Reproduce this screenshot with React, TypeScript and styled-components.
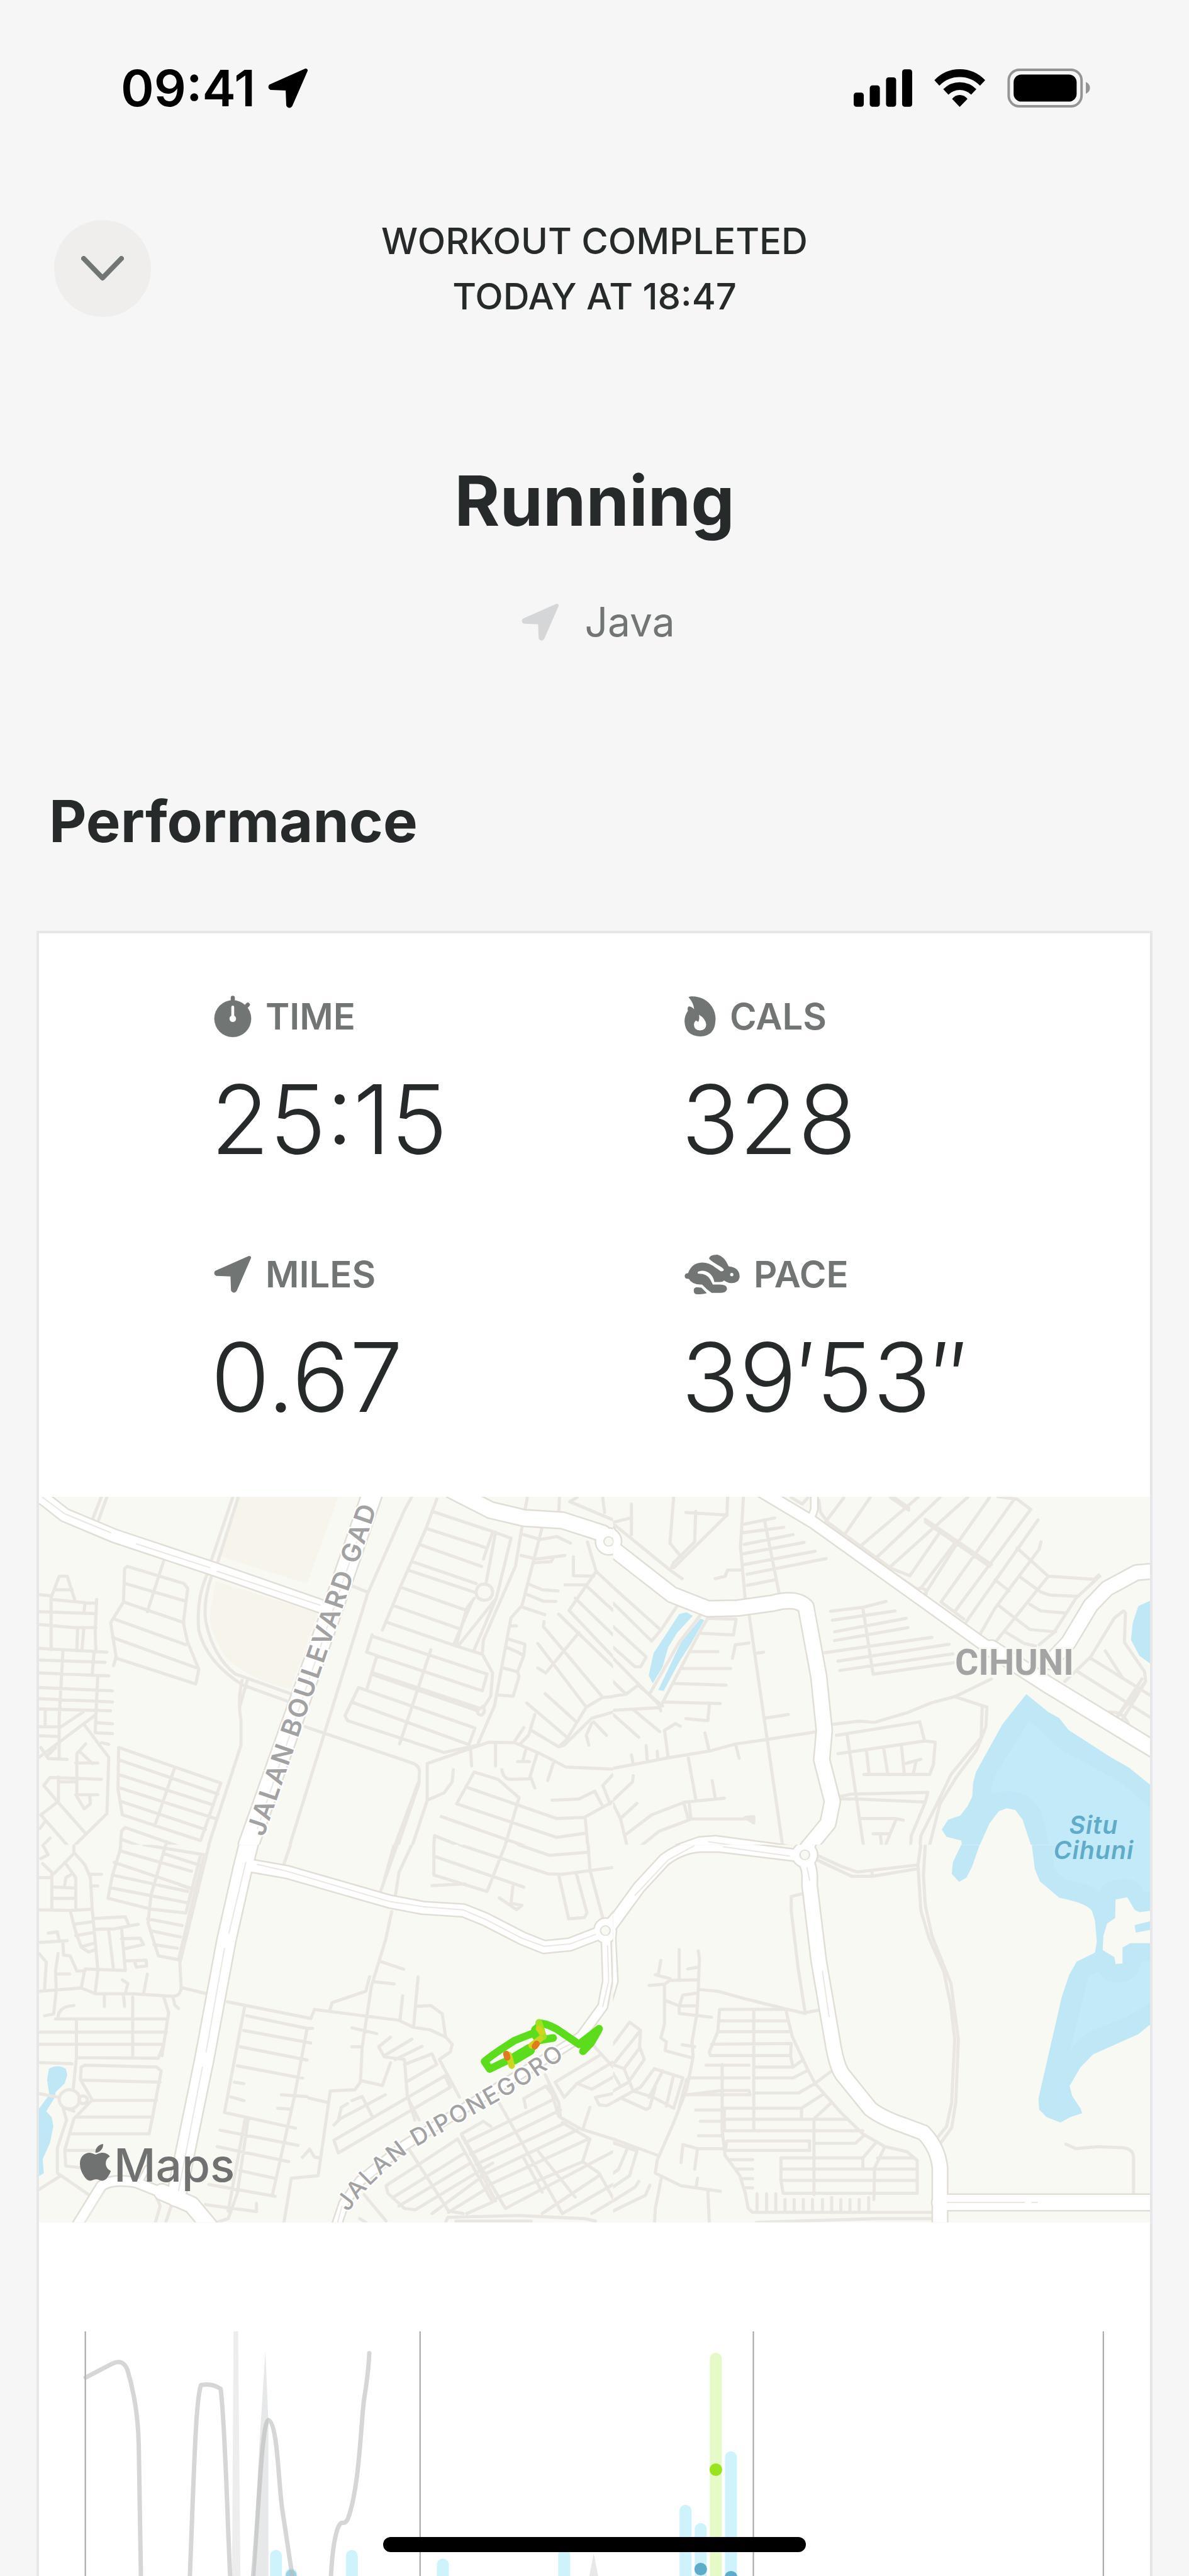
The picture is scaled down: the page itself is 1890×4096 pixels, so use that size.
import React from 'react'
import styled, { createGlobalStyle } from 'styled-components'
import { FaApple } from 'react-icons/fa'

const App = () => {
    return (
        <>
            <GlobalStyle />
            <Page>
                <StatusBar>
                    <Clock>
                        09:41
                        <LocationArrow size={64} />
                    </Clock>
                    <StatusIcons>
                        <SignalIcon />
                        <WifiIcon />
                        <BatteryIcon />
                    </StatusIcons>
                </StatusBar>

                <Header>
                    <CloseButton aria-label="Close">
                        <svg width="68" height="40" viewBox="0 0 68 40">
                            <path
                                d="M4 4 L34 35 L64 4"
                                fill="none"
                                stroke="currentColor"
                                strokeWidth="8"
                                strokeLinecap="round"
                                strokeLinejoin="round"
                            />
                        </svg>
                    </CloseButton>
                    <Summary>
                        WORKOUT COMPLETED
                        <br />
                        TODAY AT 18:47
                    </Summary>
                </Header>

                <Title>Running</Title>
                <Place>
                    <LocationArrow size={60} color="#d4d6d7" />
                    Java
                </Place>

                <SectionTitle>Performance</SectionTitle>
                <Card>
                    <Stats>
                        {stats.map(({ label, value, icon }) => (
                            <div key={label}>
                                <StatLabel>
                                    {icon}
                                    {label}
                                </StatLabel>
                                <StatValue>{value}</StatValue>
                            </div>
                        ))}
                    </Stats>
                    <RouteMap />
                    <ChartArea>
                        <PaceChart />
                    </ChartArea>
                </Card>
                <HomeIndicator />
            </Page>
        </>
    )
}

export default App

const LocationArrow = ({ size, color = 'currentColor' }: { size: number; color?: string }) => (
    <svg width={size} height={size} viewBox="0 0 64 64" fill={color} stroke={color} strokeWidth="6" strokeLinejoin="round">
        <path d="M60 4 L4 29 Q3 31 5 32 L31 33 L32 59 Q34 62 36 59 Z" />
    </svg>
)

const SignalIcon = () => (
    <svg width="93" height="60" viewBox="23 36 284 182">
        <rect x="23" y="149" width="49" height="69" rx="13" />
        <rect x="101" y="114" width="49" height="104" rx="13" />
        <rect x="180" y="75" width="49" height="143" rx="13" />
        <rect x="258" y="36" width="49" height="182" rx="13" />
    </svg>
)

const WifiIcon = () => (
    <svg width="81" height="60" viewBox="414 35 248 183">
        <path d="M415 88 Q467 35 538 35 Q609 35 662 88 L637 115 Q596 73 538 73 Q480 73 439 115 Z" />
        <path d="M458 132 Q492 98 538 98 Q585 98 619 132 L594 159 Q570 136 538 136 Q507 136 483 159 Z" />
        <path d="M501 179 Q517 160 538 160 Q560 160 576 179 L538 218 Z" />
    </svg>
)

const BatteryIcon = () => (
    <svg width="132" height="62" viewBox="770 32 402 190">
        <rect x="776" y="38" width="355" height="178" rx="52" fill="none" stroke="#929592" strokeWidth="12" />
        <rect x="800" y="61" width="307" height="132" rx="38" />
        <path d="M1152 97 Q1172 107 1172 126 Q1172 145 1152 155 Z" fill="#929592" />
    </svg>
)

const StopwatchIcon = () => (
    <svg width="60" height="67" viewBox="35 31 180 204">
        <g fill="currentColor" stroke="currentColor">
            <circle cx="125" cy="143" r="89" />
            <path d="M125 42 V60 M185 88 L198 75" strokeWidth="20" strokeLinecap="round" />
        </g>
        <path d="M125 87 V140" stroke="#fff" strokeWidth="14" strokeLinecap="round" />
        <circle cx="125" cy="143" r="16" fill="#fff" />
    </svg>
)

const FlameIcon = () => (
    <svg width="50" height="64" viewBox="32 35 150 193" fill="currentColor">
        <path d="M52 41 Q54 35 68 36 Q130 37 164 86 Q184 118 180 155 Q176 226 108 228 Q36 226 32 157 Q31 130 48 106 Q44 88 52 84 Q66 84 78 98 Q76 68 52 41 Z" />
        <path
            d="M101 124 Q133 142 136 172 Q134 198 106 199 Q78 198 77 172 Q77 160 86 152 L98 158 Q106 142 101 124 Z"
            fill="#fff"
        />
    </svg>
)

const RabbitIcon = () => (
    <svg width="88" height="63" viewBox="22 46 265 191" fill="currentColor">
        <path d="M234 102 Q287 107 287 154 Q282 184 246 183 Q228 182 212 170 Q205 178 192 178 H165 Q158 138 125 126 Q103 119 87 128 Q82 133 87 138 Q130 136 146 167 L158 190 H192 Q228 190 226 212 Q222 231 194 230 H152 Q128 214 106 190 Q58 192 42 163 Q22 163 22 148 Q24 136 39 135 Q55 86 106 84 Q141 84 170 108 L197 126 Q209 128 211 119 Q211 114 196 104 Q153 81 140 66 Q141 46 180 46 Q214 54 234 102 Z" />
        <path d="M80 203 L103 205 L129 232 Q104 239 76 236 Q65 232 66 216 Q68 204 80 203 Z" />
        <circle cx="249" cy="142" r="8" fill="#fff" />
    </svg>
)

const stats = [
    { label: 'TIME', value: '25:15', icon: <StopwatchIcon /> },
    { label: 'CALS', value: '328', icon: <FlameIcon /> },
    { label: 'MILES', value: '0.67', icon: <LocationArrow size={60} /> },
    { label: 'PACE', value: '39′53″', icon: <RabbitIcon /> },
]

type Road = { d: string; width: number }

type Tile = {
    x: number
    y: number
    height: number
    viewHeight: number
    parks?: string
    water?: string
    deep?: string
    streets: string
    roads: Road[]
    lines?: string
    islands?: [number, number][]
}

const northWest: Tile = {
    x: 60,
    y: 2400,
    height: 580,
    viewHeight: 1467,
    parks: 'M550 45 H820 L735 400 L500 290 Z M485 390 L765 520 L690 830 Q575 790 515 705 Q470 600 470 530 Z',
    streets: `
        M190 45 L165 150 M175 45 L150 140 M548 45 L490 320 M533 45 L472 315
        M475 370 Q450 480 460 560 Q480 700 540 770 L690 850 M462 365 Q432 470 440 590 Q460 720 560 815 L680 880
        M558 795 Q545 880 555 960 V1060 L460 1500 M572 795 L552 900
        M245 330 L400 400 L410 420 L398 560 L410 640 L440 750 L432 810 L215 705 M245 330 L238 340 L235 475 L200 560 L215 700 L208 735
        M240 400 L400 470 M235 475 L400 560 M210 545 L405 650 M205 620 L435 745 M345 305 L300 515
        M40 450 L60 370 H82 L102 465 M50 425 H95 M5 445 L40 450 M38 465 L130 478 L128 515 M130 480 H162 M38 450 V670 M5 515 L160 523
        M162 465 L158 600 L160 680 M5 567 L100 580 H160 M110 580 L108 675 M127 580 L122 675 M5 665 L190 680 M70 680 L60 950 V1110 M155 680 L150 770
        M5 712 L185 722 M5 765 L195 777 M165 780 L160 935 M5 825 L205 838 M5 870 L205 884 M5 912 L200 920 M22 920 V985 M5 985 H55 M60 990 L125 925
        M5 1110 L160 935 L158 1010 L205 1013 M160 968 L205 973 M130 980 L195 1110 L190 1340 L95 1480 M175 1050 L195 1057 M5 1022 L60 1025
        M10 1070 L30 1115 L82 1118 M30 1100 L50 1070 M132 1055 L108 1095 V1270 L128 1320 L145 1300 L143 1263 M115 1085 L150 1135 M105 1133 H165 M105 1263 H165
        M175 1200 L35 1192 L18 1225 L55 1290 L130 1418 M58 1190 V1290 L10 1345 L100 1500 M60 1210 H105 M20 1375 L8 1400 M12 1475 L35 1440
        M222 1070 L500 1215 L445 1450 L232 1345 L220 1240 Z M222 1120 L492 1260 M222 1180 L480 1305 M225 1235 L485 1360 M228 1290 L458 1405 M375 1150 L320 1390
        M240 1397 L455 1510 M240 1397 L230 1410 L225 1500 M230 1445 L450 1568 M225 1490 L380 1568 M353 1455 L330 1568
        M1020 45 L1000 100 L900 440 L670 1555 M858 410 L900 435 M730 985 L1025 1135 Q1045 1150 1040 1180 V1215 L960 1568 M1037 1215 L950 1568
        M1088 55 L1060 170 L990 410 L940 590 M1075 105 L1245 190 L1290 215 L1250 460 L1190 670 M1060 175 L1225 255 M1040 240 L1210 330
        M1020 310 L1195 400 M1010 345 L1190 435 M990 415 L1170 510 M970 490 L1150 585 M955 560 L1140 655 L1210 688
        M1248 190 L1222 400 M1240 190 L1215 300 M1190 460 L1170 500 L1140 655 M1185 470 L1134 650 M1250 460 L1146 655
        M1195 435 Q1198 402 1217 402 Q1240 405 1240 437 Q1238 468 1217 468 Q1196 466 1195 435
        M1320 170 L1302 330 L1215 630 L1212 688 L1240 765 L1235 860 L1218 900 L1200 915 Q1195 935 1210 938 Q1222 925 1215 900
        M912 615 L1225 770 L1212 838 L925 695 M912 610 L897 680 L925 695 L897 835 M915 765 L1205 910 M913 772 L1200 920 M1072 670 L987 1055
        M875 825 L1192 990 L1175 1060 M845 960 L838 940 L875 825 M857 885 L1170 1055 M845 960 L1108 1090 L1200 1060
        M1062 1285 V1135 L1230 1048 L1300 1050 L1370 1095 L1440 1150 L1568 1158
        M1200 1055 L1245 900 L1270 700 L1290 540 L1320 490 L1375 170 M1062 1285 L1000 1568 M1062 1285 L1108 1255 L1130 1210 L1133 1160
        M1180 1075 L1183 1145 M1248 1055 V1145 M1330 1080 L1322 1125 M1308 1127 H1340 M1265 1160 Q1270 1200 1290 1200 L1340 1198 L1360 1100
        M1345 1195 L1355 1235 M1405 1135 L1390 1205
        M1190 1170 L1255 1200 L1312 1275 L1255 1568 M1190 1170 L1142 1300 L1415 1437 L1492 1420 M1175 1235 L1415 1360 L1490 1355 L1568 1290
        M1100 1352 L1400 1510 L1500 1498 M1492 1355 L1505 1568 M1082 1430 L1310 1568 M1082 1430 L1075 1568
        M1402 1285 L1475 1280 L1518 1248 L1538 1305 M1568 1180 L1540 1225 L1560 1300
        M1335 45 L1328 100 M1422 50 L1420 115 M1470 48 L1450 65 L1568 140 M1540 50 L1545 110 M1325 200 L1370 220 L1415 208 L1452 235
        M1318 285 L1360 300 L1437 285 M1355 315 L1400 310 L1405 295 M1460 290 V368 L1515 370 M1498 230 L1522 350 L1568 415 M1522 350 L1448 510 L1568 700
        M1437 405 H1490 M1492 405 L1568 510 M1465 460 L1568 610 M1420 525 L1568 740 M1335 400 L1375 425 L1418 430 M1335 445 L1380 473 H1412
        M1318 495 L1382 527 M1288 573 H1305 M1380 555 L1378 575 L1540 865 M1280 625 L1328 648 L1325 695 L1308 680 L1278 660 M1325 695 L1308 760 L1270 745
        M1308 760 L1312 780 L1296 860 L1250 855 M1475 600 L1385 765 M1363 645 L1495 905 M1363 745 L1385 765 M1383 850 L1468 965 M1333 888 L1440 1025
        M1348 1002 L1420 1067 L1440 1040 L1495 905 L1540 865 L1568 862 M1420 1067 L1435 1060 L1510 950 L1568 925 M1355 935 L1338 1020 L1315 1055
        M1325 988 L1300 1045 M1510 970 L1495 1020 L1502 1060 M1515 965 L1550 1020`,
    roads: [
        { d: 'M-20 20 L20 55 L75 120 L210 205 L480 340 L790 502', width: 19 },
        { d: 'M1130 20 L1235 100 L1325 132 L1430 142 L1540 195', width: 24 },
        { d: 'M920 0 L805 500 L575 1470', width: 30 },
        { d: 'M1534 228 A22 34 0 1 0 1578 228 A22 34 0 1 0 1534 228', width: 14 },
    ],
    lines: 'M15 48 L75 115 L200 192 M270 238 L470 335 M490 350 L770 488 M870 230 L600 1400',
    islands: [[1556, 228]],
}

const northEast: Tile = {
    x: 990,
    y: 2400,
    height: 580,
    viewHeight: 1467,
    water: `
        M180 525 L200 517 L217 532 L175 600 L150 660 L135 740 L108 808 L97 775 L110 685 Z
        M238 543 L248 550 L210 650 L180 720 L138 838 L123 835 L150 750 L185 640 Z
        M1470 465 L1430 492 L1415 560 L1410 630 L1433 695 L1470 735 Z
        M1125 852 L1185 925 L1215 950 L1240 998 L1350 1105 L1405 1152 L1470 1232 V1568 H1148 L1140 1480 L1115 1365 L1095 1325 L1072 1318 L1050 1330
        L1025 1380 L995 1480 L975 1568 H922 L925 1530 L950 1475 L948 1450 L908 1435 L895 1405 L912 1365 L945 1348 L965 1310 L978 1270
        L980 1215 L988 1170 L1060 975 Z`,
    deep: 'M1133 960 L1220 1080 L1380 1210 L1470 1325 V1568 H1200 L1170 1350 Q1140 1220 1030 1258 Q1030 1220 1040 1185 Z',
    streets: `
        M50 75 V200 M0 150 L48 132 M0 155 L155 345 L188 380 M155 345 L165 315 L222 230 L225 105 M198 110 L310 120 L312 45 M310 120 L165 335
        M165 45 L155 235 L185 290 M355 45 L347 250 L360 470 M355 158 L440 132 M355 192 L465 170 M357 240 L490 200 M355 278 L520 232
        M355 323 L550 268 M365 362 L580 298 M365 407 L440 385 M412 140 L452 440 M350 345 H312 L305 370 L278 380
        M370 525 L462 1475 M325 705 L333 650 L370 643 M388 685 L410 680 M412 950 L477 935 M485 48 L515 75 L530 50
        M560 60 L565 110 L585 150 L750 330 M555 150 L830 425 M628 50 L580 145 M700 48 L630 200 M755 48 L805 100 M762 45 L805 90 M830 48 L675 245 M890 48 L720 290
        M965 48 L752 335 L808 368 L890 190 M850 138 L1030 322 M850 148 L1025 330 M1025 48 L935 240 L850 440 M930 235 L840 415 M1090 60 L893 475 L955 545
        M1048 45 L1100 55 L1137 97 L930 515 M1157 140 L955 570 M1165 230 L1160 260 L1040 500 L998 610 M1100 255 L1185 370 L1310 383 L1322 365
        M1325 370 L1260 460 L1200 600 L1160 650 M1185 370 L1035 650 M1105 370 L1165 435 L1190 447 L1262 452 M1135 485 L1165 512 L1230 520
        M1050 490 L1135 588 L1205 597 M1065 595 L1120 645 L1150 655 M1040 385 L1078 430 M823 437 A15 18 0 1 0 853 437 A15 18 0 1 0 823 437 M845 455 L870 490
        M592 513 L680 497 L743 473 M597 550 L768 512 M603 597 L798 542 M603 633 L803 580 M575 683 L868 620 M612 717 L915 648 M617 755 L925 687
        M680 500 L708 770 L935 722
        M598 975 L670 962 L712 967 L800 928 L865 888 L930 862 L1030 790 M930 862 L1018 905 L1015 985 L990 1080 L935 1190 L890 1300 L845 1568
        M1005 905 L1002 1030 L920 1180 L885 1290 L838 1430 L830 1568
        M608 1020 L835 965 L848 1043 L785 1057 L612 1095 M848 1043 L877 1048 L872 1140 L862 1180 H683 M637 1015 L685 1505 M690 1085 L697 1180
        M737 1075 L748 1180 M785 1060 L793 1180 M797 1135 L838 1118 M825 1125 L817 1180
        M618 1270 L650 1260 L857 1253 L850 1293 L665 1280 H620 M850 1293 L812 1430 L808 1525 M670 1360 H770 L790 1367 M770 1365 L733 1500 M708 1422 H750 M728 1430 L733 1500
        M175 490 L130 590 L105 635 L0 480 M0 415 L130 590 M0 575 L90 700 L75 740 H60 L0 660 M0 705 L125 895 L130 920 M0 860 L35 852 L68 815 M35 852 L0 800
        M68 815 L135 900 M0 918 L125 907 M55 915 L127 1005 M0 935 L70 1028 M240 525 L180 640 L100 850 M262 530 L235 600 L130 900
        M262 543 L335 545 L328 610 L240 603 M213 678 H285 M185 747 H320 M165 808 L308 815 M135 884 L292 890 M262 895 L258 960 L198 952
        M0 1155 L150 1112 L260 1085 L335 1055 L415 1038 L555 1005 M50 1100 L55 1140 M90 1062 L93 1125 M120 1085 L122 1120 M150 1110 L140 1000 L170 972 L183 983
        M250 1010 L262 1085 M335 1065 L343 1113 M205 1113 L225 1280 M270 1205 L278 1277 M303 1277 L195 1293 L105 1345 L35 1425
        M192 1293 L205 1363 M207 1293 L212 1363 L125 1412 L45 1510 M210 1362 H382 M360 1355 L383 1352 V1378 Z
        M55 1185 L53 1210 L0 1285 M65 1298 L20 1360 M0 1300 L20 1360 L45 1515
        M1390 512 L1365 540 L1300 700 L1230 800 M1390 512 L1395 520 L1392 640 L1447 760 L1450 800 L1375 940 M1300 705 L1461 855 M1340 675 L1385 780
        M1262 757 L1461 945 M1440 790 L1370 950 M1450 800 L1385 960 M1350 925 Q1390 920 1405 980`,
    roads: [
        { d: 'M548 20 L548 95 L538 140', width: 9 },
        { d: 'M400 20 L545 150 L1010 650 L1060 690', width: 17 },
        { d: 'M1030 665 L1180 810 L1480 1085', width: 24 },
        { d: 'M1480 348 L1425 355 L1345 420 L1300 490 L1240 640 L1190 720', width: 22 },
        { d: 'M-13 195 L0 258 L160 445 L258 503 L340 500 L435 480 Q500 455 525 495 L560 780 L575 1000 L568 1120 L597 1290 L585 1380 L530 1480', width: 23 },
        { d: 'M60 1590 L170 1495 L235 1460 L280 1455 L490 1497', width: 17 },
        { d: 'M-35 228 A22 34 0 1 0 9 228 A22 34 0 1 0 -35 228', width: 14 },
    ],
    lines: 'M130 1540 L200 1485 M260 1455 L470 1500',
    islands: [[-13, 228]],
}

const southWest: Tile = {
    x: 60,
    y: 2980,
    height: 610,
    viewHeight: 1495,
    water: `M32 887 Q55 867 78 887 L82 910 L75 945 L50 980 L48 1000 L25 1055 L40 1080 L44 1115 L35 1180 L15 1245 L18 1300 L5 1312 V1045 L33 990 L27 930 Z`,
    streets: `
        M100 0 V30 L130 80 L145 130 L150 255 L165 490 M100 35 L35 130 H0 M40 110 V255 M15 0 L30 40 L10 55 M15 75 L40 110 M75 70 L105 130 V250
        M75 160 L78 130 L90 120 M40 167 L105 172 M40 212 H105 M5 258 L90 260 L150 255 M145 117 H175 M145 163 H165 M90 262 L105 345 L120 405 L140 425 L160 415
        M100 315 L150 305 M105 360 L155 347 M122 403 L155 390 M155 292 L240 285 L250 320 M155 335 L210 333 L275 315 M195 340 L208 495 M230 335 L240 498
        L130 492 L120 567 M230 372 L280 370 L290 395 L237 412 M242 460 L297 457 L298 480 L270 485 L265 460 M30 350 L55 345 L60 380 M5 387 L82 380
        M70 385 L72 437 L90 440 L108 500 H130 M5 430 L25 465 L20 575 M57 430 L50 500 L52 575 L45 670 L20 677 M55 512 H88 M5 580 L120 567
        M120 567 L160 590 L260 590 L370 600 Q390 600 392 565 M165 500 L158 585 M183 595 V640 M235 595 L238 640 M300 512 L290 588 M232 535 L247 550 L240 590
        M260 603 V835 M345 605 L358 665 L340 835 M370 605 L375 635 L385 648 M100 637 Q55 640 57 690 M50 690 H355 M5 742 H352 M5 790 H345
        M107 693 V840 L98 970 M110 843 L330 845 L345 790 M5 862 L95 867 M120 880 L130 873 L325 880 L338 895 L305 1145 H90
        M120 880 L118 930 L150 1010 L100 1085 L75 1210 L78 1272 L140 1282 M120 932 L335 940 M150 1012 H325 M105 1078 H315 M78 1210 H160
        M60 1008 A28 38 0 1 0 116 1008 A28 38 0 1 0 60 1008 M113 1010 A12 15 0 1 0 137 1010 A12 15 0 1 0 113 1010
        M5 985 L60 1000 M70 1040 L80 1090 L55 1200 V1300 L140 1385 M65 1310 L5 1365 M80 1045 L100 1055
        M228 0 L225 25 L205 120 L193 212 L310 255 L405 270 M228 25 L420 105 M290 0 L455 40 L430 180 L385 455 L330 440 L302 310 L310 200 L350 0
        M210 70 L435 180 M205 120 L410 185 M198 170 L410 230 M345 35 L440 80 M390 160 L438 185 M445 40 L405 270 M468 0 L390 460
        M300 293 L395 320 M308 340 L390 365 M318 395 L382 410 M388 455 L392 565 L462 590
        M690 0 L670 85 M965 265 L950 370 L910 560 L885 800 L880 940 L865 970 L798 975 L765 1310 L692 1320 L672 1495 M980 0 L935 185 M972 0 L945 140
        M1020 0 L985 110 L975 205 M935 462 L998 493 M918 543 L972 551 M905 523 L895 580 L803 625 L797 655
        M518 622 L745 688 L755 652 L985 695 L1025 723 L1070 733 L1110 760 M995 598 L988 692 M1037 523 L1025 720
        M1035 640 L1072 637 L1103 670 L1112 760 L1130 790 L1125 820 L1095 850 L1150 1000 M857 725 L925 748 M857 800 H885 M885 935 L940 953 L962 863
        M565 640 L510 1060 L703 1122 M570 677 L735 727 H750 M735 727 L700 1000 L640 1390 M562 735 L745 785 M553 800 L735 852 M545 875 L723 924
        M537 940 L563 946 M527 998 L563 1013 M665 990 L735 997 M740 1003 L790 1020 M655 1043 L690 1047 M575 1080 L545 1380 L520 1480 L490 1495 M567 1080 L520 1450
        M498 1130 L710 1190 M490 1195 L685 1255 M552 1290 L645 1320 M468 1345 L648 1392 M458 1425 L597 1452 V1420 M722 1238 L742 1205 L755 1237 L770 1240
        M962 762 L930 800 L945 840 L1000 850 L1008 1000 L1040 1090 M1020 770 L945 835 M1048 798 L975 850 M1000 870 L1075 828 L1088 870 L1010 935
        M1110 915 L1125 960 L820 1220 L808 1170 L1110 915 M1010 1000 L1028 1090 M808 1110 L825 1085 L948 990 M820 1090 L828 1040 L845 1025 M857 1013 L885 997 L913 1078
        M1383 910 L1420 1020 L1425 1080 L1480 1125 L1568 1165 M1390 930 L1420 1075 M1505 780 L1568 880 M1530 835 L1410 940 L1435 1000 L1470 945 L1568 860
        M1470 945 L1510 968 L1568 920 M1568 985 L1520 1000 L1530 1030 L1550 1033 L1568 1020 M1505 1040 L1487 1120
        M1255 1015 L1300 1130 L1430 1460 M1330 1040 L1325 1005 L1385 955 L1400 985 M1160 1165 L1155 1145 L1215 1095 L1235 1115 M1155 1145 L1275 1440
        M1165 1180 L1410 1005 M1180 1225 L1425 1050 M1195 1265 L1440 1100 M1210 1310 L1470 1130 M1225 1350 L1500 1165 M1275 1440 L1568 1215
        M1250 1400 L1485 1255 M1430 1460 L1568 1345 M1375 1460 L1530 1310 M1510 1460 L1568 1410 M1430 1100 L1505 1165 L1485 1255 L1530 1300 L1568 1400
        M1365 1215 L1465 1395 M1325 1240 L1375 1375
        M1145 1165 L950 1350 L955 1380 L1000 1440 L1030 1445 L1240 1260 M1145 1165 L1240 1415 L1170 1460 M1010 1200 L1120 1450 L1160 1460
        M1165 1220 L970 1395 M1180 1260 L985 1430 M1160 1160 L1248 1410 M1215 1310 L1075 1460 M1225 1360 L1120 1455
        M1112 1495 L1118 1475 L1310 1468 L1490 1480 L1520 1490 M1140 1490 H1345 M890 1385 L950 1490 M878 1480 L895 1495 M325 1395 L335 1430 L322 1495 M365 1430 L350 1495
        M1080 0 V120 L1225 185 L1275 0 M1080 45 L1325 168 M1150 0 L1390 115 L1430 117 L1568 90 M1310 0 L1395 42 L1500 30 M1500 0 L1505 100 L1540 290
        M1075 162 L1165 155 M1295 165 L1290 235 M1258 210 L1305 257 L1320 240 L1290 232 M1420 120 L1447 293 L1490 288 L1497 270 L1468 115`,
    roads: [
        { d: 'M105 1515 L175 1350 Q205 1320 270 1337 L370 1395', width: 14 },
        { d: 'M275 1350 L300 1280', width: 6 },
        { d: 'M340 1375 L420 1425 L475 1520', width: 24 },
        { d: 'M570 80 L680 108 L960 225 L1050 250 L1160 260 L1220 295 L1320 370 L1380 405 L1450 395 L1530 350', width: 18 },
        { d: 'M1549 370 L1553 540 L1540 640 L1480 760 L1420 815 L1200 1010 L1000 1190 L880 1330 L835 1420 L812 1520', width: 13 },
        { d: 'M1550 335 L1590 265', width: 17 },
        { d: 'M579 -20 L560 90 L515 380 L455 850 L378 1395', width: 28 },
        { d: 'M1528 340 A19 32 0 1 0 1566 340 A19 32 0 1 0 1528 340', width: 12 },
    ],
    lines: `M568 70 L522 350 M510 410 L460 820 M450 880 L385 1370 M600 78 L680 105 L960 225 L1050 245 L1160 258 L1220 295 L1320 370 L1380 402 L1450 393 L1520 355
        M130 1495 L185 1370 M1553 400 L1556 540 L1540 640 M1450 790 L1410 820 M830 1430 L818 1495`,
    islands: [[1547, 340]],
}

const southEast: Tile = {
    x: 990,
    y: 2980,
    height: 610,
    viewHeight: 1495,
    water: `
        M1140 0 L1148 95 L1162 145 L1215 210 Q1300 235 1305 268 L1312 300 L1317 385 L1312 427 L1262 463 L1242 515 L1222 600 L1158 1005 L1160 1048
        L1180 1078 L1218 1100 L1245 1078 L1277 1063 L1273 1045 L1250 995 L1243 955 L1272 882 L1307 830 L1430 750 L1470 702 V390 H1408 L1387 407
        V470 L1368 472 L1365 445 L1333 417 L1335 360 L1345 312 L1367 290 L1368 217 L1400 208 L1420 258 L1433 267 L1470 260 V0 Z
        M1420 318 L1470 300 V335 L1423 348 Z M948 0 H998 L978 85 L962 130 L942 147 L922 115 L925 70 Z`,
    deep: `M1200 0 V90 Q1220 140 1270 150 Q1310 165 1325 190 Q1330 135 1400 135 Q1430 140 1445 185 L1470 190 V0 Z
        M1325 500 L1295 520 L1243 820 Q1270 760 1300 740 L1400 680 L1470 620 V460 H1438 Q1430 545 1375 545 Q1330 540 1325 500 Z`,
    streets: `
        M560 45 L620 85 L665 108 L830 80 M558 62 L650 125 H705 L830 95 M705 108 V125
        M838 0 L830 80 L838 260 L860 370 L900 500 L920 640 L930 770 L922 1020 L908 1115 L880 1165
        M850 0 L845 120 L850 240 L868 360 L920 550 L940 770 L933 1020 L922 1120 L890 1185
        M512 195 L485 205 V260 L503 480 L523 665 L560 655 M523 668 L470 650 L365 612 L285 580 L235 573
        M180 415 V535 M232 420 L235 450 L232 570 L228 670 L215 780 L218 840 L200 970 L165 1100 L120 1250 L115 1300 L185 1350 L292 1372
        M130 458 L123 515 L115 515 L155 530 M98 557 L140 552 L155 537 L230 535 M203 492 L230 485 M140 555 V710 L130 765 L145 780 L142 815 L213 843
        M143 617 L180 638 H230 M225 588 L190 595 L180 640 V668 L268 683 M188 792 L222 800
        M0 790 L45 703 L75 735 L72 800 L85 850 L42 940 L0 975 M75 735 L0 870 L30 887 L55 975 L0 1020 M72 805 L30 887 M0 905 L20 955 M25 1005 L90 1048 L100 1040 L115 960
        M112 887 L190 923 L165 1043 L110 1000 L55 975 L75 960 L112 887 M135 895 L98 1000 M165 910 L145 1035 M200 930 L180 1040
        M290 652 H470 M290 652 L285 740 L262 820 L265 835 H483 M287 697 H478 M285 740 H485 M268 790 L485 787 L483 835 L490 880 M383 652 V1130
        M385 880 H490 L518 850 M470 652 L488 760 L530 890 L550 945 L620 1060 L680 1145 L740 1195 L800 1215 L828 1250 V1380 H463 L457 1329 V1240 H680
        M253 873 H370 M297 870 V1130 L305 1230 L345 1310 L360 1380 L368 1440 L380 1455 H870 M205 923 H370 M385 923 H490 L528 895
        M600 890 L550 945 L505 983 H385 M200 990 L297 973 H370 L373 990 Z M303 1130 V1043 H513 L575 985 M513 1043 V1080 M225 1050 H297 M238 1095 H297 M305 1087 H635
        M595 1020 L547 1085 V1385 M297 1132 H680 M233 1152 H297 M310 1173 H535 V1210 H305 Z M550 1182 H660 L685 1148 M305 1203 H230 L190 1187 L185 1258
        M230 1203 L222 1285 M320 1247 H380 M335 1284 H380 M350 1322 H380 M360 1358 H380 M720 1240 H820 M457 1284 H828 M457 1329 H828
        M715 1180 L680 1240 V1285 M740 1195 L712 1280 L710 1405
        M392 1382 V1450 M418 1382 V1450 M443 1382 V1450 M468 1405 V1450 M493 1405 V1450 M518 1405 V1450 M543 1405 V1450 M570 1405 V1450
        M595 1397 V1450 M620 1405 V1450 M645 1405 V1450 M670 1405 V1450 M696 1397 V1450
        M230 1320 L226 1355 M258 1370 L262 1495 M132 1315 L115 1440 L113 1495 M390 1495 L720 1480 H870
        M1233 1185 L1260 1203 L1320 1195 L1390 1200 Q1417 1205 1417 1240 V1390
        M0 1165 L122 1230 M0 1180 L65 1212 L45 1310 L0 1355 M38 1205 L15 1285 L0 1300 M70 1333 L60 1355 L0 1410 M100 1348 L88 1388 L0 1450`,
    roads: [
        { d: 'M-20 348 L0 310 L70 170 L140 60 Q185 10 235 5 L290 5 L500 42', width: 17 },
        { d: 'M-4 340 L-6 370 L0 540 L-24 660', width: 13 },
        { d: 'M890 1416 H1490', width: 24 },
        { d: 'M540 -25 L522 30', width: 20 },
        {
            d: 'M522 60 Q538 90 535 160 L560 460 L600 800 Q610 880 625 910 L700 1045 Q730 1080 790 1110 L845 1140 Q885 1200 890 1280 V1520',
            width: 22,
        },
        { d: 'M501 40 A21 30 0 1 0 543 40 A21 30 0 1 0 501 40', width: 14 },
    ],
    lines: 'M60 200 L150 60 L220 5 M300 8 L480 45 M528 90 L535 140 M570 500 L588 680 M910 1416 H1120 M1140 1416 H1155',
    islands: [[522, 40]],
}

const tiles = [northWest, northEast, southWest, southEast]

const RouteMap = () => (
    <MapCanvas viewBox="63 2418 1794 1172" role="img" aria-label="Route map">
        <rect x="63" y="2418" width="1794" height="1172" fill="#f8f9f3" />
        {tiles.map((tile) => (
            <svg
                key={`${tile.x}-${tile.y}`}
                x={tile.x}
                y={tile.y}
                width="930"
                height={tile.height}
                viewBox={`0 0 1568 ${tile.viewHeight}`}
                preserveAspectRatio="none"
            >
                <path d={tile.parks} fill="#f7f4ec" />
                <path d={tile.water} fill="#bfe7f6" />
                <path d={tile.deep} fill="#c3eaf8" />
                <Line d={tile.streets} stroke="#eae7e2" strokeWidth={5} />
                {tile.roads.map((road) => (
                    <Line key={road.d} d={road.d} stroke="#e2ded6" strokeWidth={road.width + 5} />
                ))}
                {tile.roads.map((road) => (
                    <Line key={road.d} d={road.d} stroke="#fff" strokeWidth={road.width} />
                ))}
                <Line d={tile.lines} stroke="#ebe8e3" strokeWidth={2} />
                {tile.islands?.map(([x, y]) => (
                    <ellipse key={x} cx={x} cy={y} rx="13" ry="19" fill="#f8f9f3" stroke="#e4e0d9" strokeWidth="4" />
                ))}
            </svg>
        ))}

        {/* recorded run, coloured by speed */}
        <svg x="60" y="2980" width="930" height="610" viewBox="0 0 1568 1495" preserveAspectRatio="none">
            <Line
                d="M1368 706 Q1400 712 1430 745 L1475 790 L1530 728 M1528 735 L1508 785 L1486 818 L1495 790 L1520 750"
                stroke="#5cdd1b"
                strokeWidth={12}
            />
            <Line
                d="M1368 712 L1352 745 L1300 775 Q1240 830 1218 858 L1232 888 L1260 868 L1340 815 L1365 775 L1405 765"
                stroke="#5cdd1b"
                strokeWidth={12}
            />
            <Line d="M1298 848 L1340 812 M1360 735 L1362 755" stroke="#5cdd1b" strokeWidth={18} />
            <Line d="M1366 704 L1378 760" stroke="#a0e020" strokeWidth={11} />
            <Line d="M1366 728 L1374 742 M1370 768 L1346 795 M1284 832 L1292 875" stroke="#cdd51e" strokeWidth={10} />
            <Line d="M1355 798 L1360 788 M1277 828 L1280 842" stroke="#e07a1c" strokeWidth={10} />
        </svg>

        <path id="boulevard" d="M426 2968 L640 2344" fill="none" />
        <path id="diponegoro" d="M562 3574 Q606 3512 676 3466 L790 3402 Q850 3370 932 3308" fill="none" />
        <RoadLabel fontSize="42" fontWeight="600" letterSpacing="3">
            <textPath href="#boulevard">JALAN BOULEVARD GAD</textPath>
        </RoadLabel>
        <RoadLabel fontSize="38" fontWeight="500" letterSpacing="3">
            <textPath href="#diponegoro">JALAN DIPONEGORO</textPath>
        </RoadLabel>
        <DistrictLabel x="1638" y="2705">
            CIHUNI
        </DistrictLabel>
        <LakeLabel x="1766" y="2963">
            Situ
        </LakeLabel>
        <LakeLabel x="1766" y="3003">
            Cihuni
        </LakeLabel>
        <FaApple x="120" y="3459" size="68" color="#6f7271" />
        <Attribution x="184" y="3524">
            Maps
        </Attribution>
    </MapCanvas>
)

const heartBars = [
    { x: 364, top: 1478 },
    { x: 384, top: 1558 },
    { x: 464, top: 1478 },
    { x: 584, top: 1516 },
    { x: 744, top: 1470 },
    { x: 904, top: 1282 },
    { x: 924, top: 1361 },
    { x: 964, top: 1049 },
]

const PaceChart = () => (
    <ChartCanvas viewBox="63 3766 1794 395" role="img" aria-label="Pace chart">
        <svg x="0" y="3580" width="1920" height="582" viewBox="0 0 1568 1568" preserveAspectRatio="none">
            <path d="M308 501 H314 L317 1568 H306 Z" fill="#ededee" />
            <path d="M350 585 L354 900 V1568 H333 L342 1000 Z" fill="#e7e8e9" />
            <path d="M783 1468 L789 1568 H777 Z" fill="#e7e8e9" />
            <Line d="M112.5 501 V1620 M554 501 V1620 M993.5 501 V1620 M1455 501 V1620" stroke="#a3a5a5" strokeWidth={2} strokeLinecap="butt" />
            {heartBars.map(({ x, top }) => (
                <Line key={x} d={`M${x} ${top} V1620`} stroke="#cff3fc" strokeWidth={19} />
            ))}
            <Line d="M944 620 V1620" stroke="#e5fac6" strokeWidth={19} />
            <Line d="M944 1103 h0.1" stroke="#98e51d" strokeWidth={20} />
            <Line d="M924 1536 h0.1 M964 1571 h0.1" stroke="#5cacca" strokeWidth={20} />
            <Line d="M384 1562 V1620" stroke="#9ad3e4" strokeWidth={17} />
            <Line
                d="M113 702 L148 642 Q162 618 168 668 Q182 820 183 1000 L186 1600
                M250 1600 C256 1100 258 800 265 735 Q280 725 291 752 C297 900 300 1350 304 1600
                M333 1600 C342 1250 345 900 354 887 C366 900 367 1150 372 1270 L387 1600
                M436 1600 C438 1420 445 1335 451 1334 Q456 1338 459 1315 C474 1180 476 900 480 800 Q486 680 487 596"
                stroke="#b9bbbb"
                strokeOpacity={0.6}
                strokeWidth={7}
            />
        </svg>
    </ChartCanvas>
)

const GlobalStyle = createGlobalStyle`
    * {
        box-sizing: border-box;
    }
    body {
        margin: 0;
        background: #f6f6f6;
        color: #262a2a;
        font-family: Inter, 'Liberation Sans', sans-serif;
    }
    svg {
        flex: none;
    }
`

const Page = styled.main`
    overflow: hidden;
`

const StatusBar = styled.div`
    display: flex;
    justify-content: space-between;
    align-items: center;
    padding: 88px 157px 0 192px;
    color: #000;
`

const Clock = styled.div`
    display: flex;
    align-items: center;
    gap: 20px;
    font-size: 80px;
    font-weight: 600;
    line-height: 104px;
`

const StatusIcons = styled.div`
    display: flex;
    align-items: center;
    gap: 35px;
`

const Header = styled.header`
    display: grid;
    grid-template-columns: 1fr auto 1fr;
    align-items: center;
    padding: 0 86px;
    margin-top: 147px;
`

const CloseButton = styled.button`
    display: flex;
    align-items: center;
    justify-content: center;
    width: 154px;
    height: 154px;
    padding: 0;
    border: none;
    border-radius: 50%;
    background: #efeeed;
    color: #717573;
    cursor: pointer;
`

const Summary = styled.p`
    margin: 0;
    font-size: 58px;
    font-weight: 500;
    line-height: 88px;
    text-align: center;
`

const Title = styled.h1`
    margin: 213px 0 0;
    font-size: 110px;
    font-weight: 700;
    line-height: 136px;
    text-align: center;
`

const Place = styled.div`
    display: flex;
    align-items: center;
    justify-content: center;
    gap: 40px;
    margin-top: 85px;
    padding-left: 12px;
    font-size: 64px;
    line-height: 80px;
    color: #717573;
`

const SectionTitle = styled.h2`
    margin: 221px 0 118px;
    padding-left: 78px;
    font-size: 92px;
    font-weight: 700;
    line-height: 112px;
`

const Card = styled.section`
    margin: 0 58px;
    border: 4px solid #e5e7e9;
    border-bottom: none;
    background: #fff;
`

const Stats = styled.div`
    display: grid;
    grid-template-columns: 1fr 1fr;
    gap: 120px 8px;
    padding: 96px 0 100px 278px;
`

const StatLabel = styled.div`
    display: flex;
    align-items: center;
    gap: 22px;
    font-size: 58px;
    font-weight: 600;
    line-height: 72px;
    color: #717573;
`

const StatValue = styled.div`
    margin: 38px 0 0 -5px;
    font-size: 152px;
    font-weight: 300;
    line-height: 180px;
`

const MapCanvas = styled.svg`
    display: block;
    width: 100%;
`

const Line = styled.path`
    fill: none;
    stroke-linecap: ${({ strokeLinecap }) => strokeLinecap || 'round'};
    stroke-linejoin: round;
    vector-effect: non-scaling-stroke;
`

const RoadLabel = styled.text`
    fill: #a2a2a2;
    stroke: #fff;
    stroke-width: 5px;
    paint-order: stroke;
`

const DistrictLabel = styled.text`
    font-family: Roboto, 'Liberation Sans', sans-serif;
    font-size: 58px;
    font-weight: 700;
    fill: #a4a4a4;
    stroke: #f8f9f3;
    stroke-width: 6px;
    paint-order: stroke;
    text-anchor: middle;
`

const LakeLabel = styled.text`
    font-size: 40px;
    font-style: italic;
    font-weight: 600;
    letter-spacing: 1px;
    fill: #5fabc8;
    text-anchor: middle;
`

const Attribution = styled.text`
    font-size: 74px;
    font-weight: 500;
    fill: #6f7271;
`

const ChartArea = styled.div`
    padding-top: 173px;
`

const ChartCanvas = styled.svg`
    display: block;
    width: 100%;
`

const HomeIndicator = styled.div`
    position: fixed;
    bottom: 38px;
    left: 50%;
    width: 672px;
    height: 24px;
    margin-left: -336px;
    border-radius: 12px;
    background: #000;
`
